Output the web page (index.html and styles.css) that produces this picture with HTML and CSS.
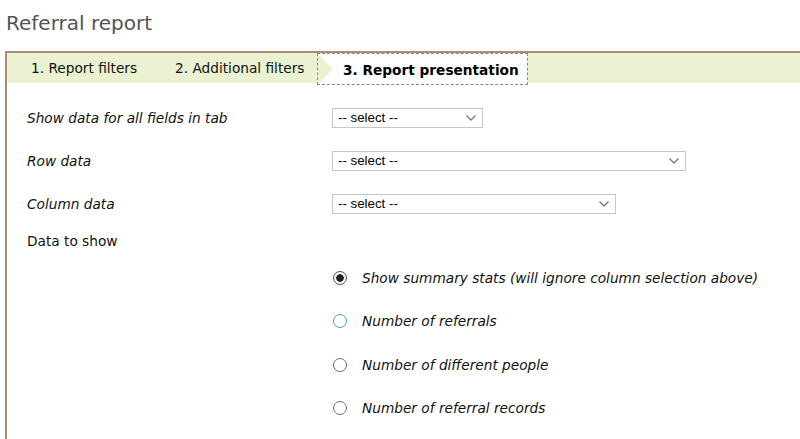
FILE: index.html
```html
<!DOCTYPE html>
<html>
<head>
<meta charset="utf-8">
<link rel="stylesheet" href="styles.css">
</head>
<body>
<h1 class="title">Referral report</h1>
<div class="panel">
  <div class="tabs">
    <div class="tab tab-1">1. Report filters</div>
    <div class="tab tab-2">2. Additional filters</div>
    <div class="tab tab-3 active">3. Report presentation</div>
  </div>
  <div class="form">
    <div class="row">
      <div class="label italic">Show data for all fields in tab</div>
      <div class="select w-small"><span>-- select --</span><svg width="10" height="6" viewBox="0 0 10 6"><path d="M0.5 0.5 L5 5 L9.5 0.5" fill="none" stroke="#777" stroke-width="1.3"/></svg></div>
    </div>
    <div class="row">
      <div class="label italic">Row data</div>
      <div class="select w-large"><span>-- select --</span><svg width="10" height="6" viewBox="0 0 10 6"><path d="M0.5 0.5 L5 5 L9.5 0.5" fill="none" stroke="#777" stroke-width="1.3"/></svg></div>
    </div>
    <div class="row">
      <div class="label italic">Column data</div>
      <div class="select w-medium"><span>-- select --</span><svg width="10" height="6" viewBox="0 0 10 6"><path d="M0.5 0.5 L5 5 L9.5 0.5" fill="none" stroke="#777" stroke-width="1.3"/></svg></div>
    </div>
    <div class="row row-short">
      <div class="label">Data to show</div>
    </div>
    <div class="radio-row">
      <span class="radio checked"></span><span class="radio-label">Show summary stats (will ignore column selection above)</span>
    </div>
    <div class="radio-row">
      <span class="radio focused"></span><span class="radio-label">Number of referrals</span>
    </div>
    <div class="radio-row">
      <span class="radio"></span><span class="radio-label">Number of different people</span>
    </div>
    <div class="radio-row">
      <span class="radio"></span><span class="radio-label">Number of referral records</span>
    </div>
  </div>
</div>
</body>
</html>
```
FILE: styles.css
```css
html, body {
  margin: 0;
  padding: 0;
  background: #fff;
  font-family: "DejaVu Sans", Verdana, sans-serif;
  color: #111;
}

.title {
  margin: 0;
  padding: 11px 0 0 6px;
  height: 51px;
  box-sizing: border-box;
  font-size: 20px;
  font-weight: normal;
  line-height: 24px;
  color: #555;
}

.panel {
  margin-left: 5px;
  border-top: 2px solid #a98b77;
  border-left: 2px solid #a98b77;
  height: 400px;
}

.tabs {
  display: flex;
  height: 30px;
  background: #ebf2d2;
  font-size: 13.7px;
}

.tab {
  display: flex;
  align-items: center;
  box-sizing: border-box;
  height: 30px;
  white-space: nowrap;
}

.tab-1 {
  width: 150px;
  padding-left: 24px;
}

.tab-2 {
  width: 160px;
  padding-left: 18px;
}

.tab-3 {
  position: relative;
  width: 211px;
  height: 32px;
  padding-left: 25px;
  padding-top: 2px;
  background: #fff;
  border: 1px dashed #888;
  font-weight: bold;
  color: #000;
}

.tab-3::before {
  content: "";
  position: absolute;
  left: 0;
  top: 0;
  width: 0;
  height: 0;
  border-top: 15px solid transparent;
  border-bottom: 15px solid transparent;
  border-left: 15px solid #ebf2d2;
}

.form {
  padding-top: 13px;
  font-size: 13.7px;
}

.row {
  display: grid;
  grid-template-columns: 305px auto;
  align-items: center;
  height: 43px;
  padding-left: 20px;
}

.row-short {
  height: 31px;
}

.italic {
  font-style: italic;
}

.label {
  color: #111;
}

.select {
  display: flex;
  align-items: center;
  justify-content: space-between;
  box-sizing: border-box;
  height: 20px;
  border: 1px solid #c6c6c6;
  padding: 0 6px 0 5px;
  font-family: "Liberation Sans", Arial, sans-serif;
  font-size: 13.3px;
  color: #000;
  background: #fff;
}

.w-small { width: 151px; }
.w-medium { width: 284px; }
.w-large { width: 354px; }

.radio-row {
  display: flex;
  align-items: center;
  height: 43.5px;
  padding-left: 326px;
}

.radio {
  box-sizing: border-box;
  width: 14px;
  height: 14px;
  border-radius: 50%;
  border: 1.5px solid #6b6b6b;
  background: #fff;
  margin-right: 15px;
  flex: none;
}

.radio.checked {
  border-color: #555;
  background: radial-gradient(circle, #222 0 3.5px, #f4f4f4 4px);
}

.radio.focused {
  border-color: #4a9ae6;
}

.radio-label {
  font-style: italic;
  white-space: nowrap;
}
```
